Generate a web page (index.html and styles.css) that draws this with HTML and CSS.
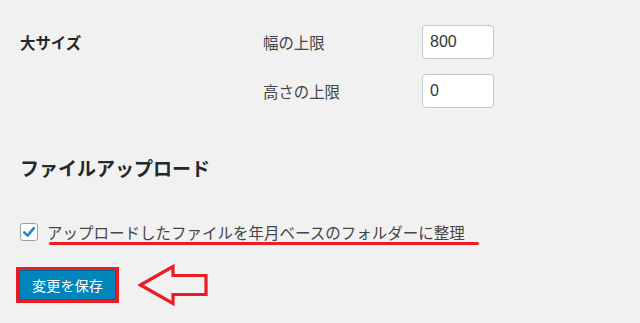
FILE: index.html
```html
<!DOCTYPE html>
<html lang="ja">
<head>
<meta charset="utf-8">
<link rel="stylesheet" href="styles.css">
</head>
<body>
<div class="page">
  <div class="size-row">
    <div class="size-title">大サイズ</div>
    <div class="size-fields">
      <div class="field">
        <span class="field-label">幅の上限</span>
        <input class="num" type="text" value="800">
      </div>
      <div class="field">
        <span class="field-label">高さの上限</span>
        <input class="num" type="text" value="0">
      </div>
    </div>
  </div>

  <h2 class="section-title">ファイルアップロード</h2>

  <div class="check-row">
    <span class="checkbox">
      <svg width="14" height="14" viewBox="0 0 14 14"><path d="M2.2 7.4 L5.6 10.6 L11.8 3.2" fill="none" stroke="#1e8cbe" stroke-width="2.6" stroke-linecap="round" stroke-linejoin="round"/></svg>
    </span>
    <span class="check-label">アップロードしたファイルを年月ベースのフォルダーに整理</span>
    <span class="mark-line"></span>
  </div>

  <div class="submit-row">
    <div class="highlight">
      <button class="primary">変更を保存</button>
    </div>
    <svg class="arrow" width="72" height="44" viewBox="0 0 72 44">
      <path d="M2.5 22 L35 3.5 L35 12.5 L68 12.5 L68 31.5 L35 31.5 L35 40.5 Z" fill="none" stroke="#ec1c24" stroke-width="3.2" stroke-linejoin="miter"/>
    </svg>
  </div>
</div>
</body>
</html>
```
FILE: styles.css
```css
html, body {
  margin: 0;
  padding: 0;
  background: #f1f1f1;
}
body {
  font-family: "Noto Sans CJK JP", "Noto Sans", sans-serif;
  color: #444;
  width: 640px;
  height: 323px;
  overflow: hidden;
}
.page {
  padding: 25px 0 0 20px;
}
.size-row {
  display: flex;
}
.size-title {
  width: 243px;
  font-size: 15.4px;
  font-weight: bold;
  color: #23282d;
  line-height: 22px;
  padding-top: 6px;
}
.size-fields {
  display: flex;
  flex-direction: column;
  gap: 15px;
}
.field {
  display: flex;
  align-items: center;
}
.field-label {
  width: 159px;
  font-size: 15.4px;
  color: #444;
}
.num {
  box-sizing: border-box;
  width: 72px;
  height: 34px;
  border: 1px solid #c3c6ca;
  border-radius: 4px;
  background: #fff;
  font-family: "Liberation Sans", "Noto Sans", sans-serif;
  font-size: 16px;
  color: #32373c;
  padding: 0 7px;
  margin: 0;
}
.section-title {
  margin: 47px 0 0 0;
  font-size: 19px;
  font-weight: bold;
  color: #23282d;
  line-height: 26px;
}
.check-row {
  position: relative;
  display: flex;
  align-items: center;
  margin-top: 40px;
  height: 22px;
}
.checkbox {
  box-sizing: border-box;
  width: 18px;
  height: 18px;
  border: 1px solid #9aa0a6;
  border-radius: 3px;
  background: #fff;
  display: flex;
  align-items: center;
  justify-content: center;
  margin-right: 9px;
}
.check-label {
  font-size: 15.5px;
  color: #444;
  white-space: nowrap;
}
.mark-line {
  position: absolute;
  left: 29px;
  top: 21px;
  width: 430px;
  height: 3px;
  border-radius: 2px;
  background: #ec1c24;
}
.submit-row {
  display: flex;
  align-items: center;
  margin-top: 20px;
  margin-left: -4px;
}
.highlight {
  border: 3px solid #ec1c24;
  padding: 0;
}
.primary {
  display: block;
  width: 97px;
  height: 30px;
  border: 1px solid #006799;
  background: #0085ba;
  color: #fff;
  font-family: "Noto Sans CJK JP", "Noto Sans", sans-serif;
  font-size: 14.2px;
  padding: 0;
  margin: 0;
}
.arrow {
  margin-left: 19px;
}
```
